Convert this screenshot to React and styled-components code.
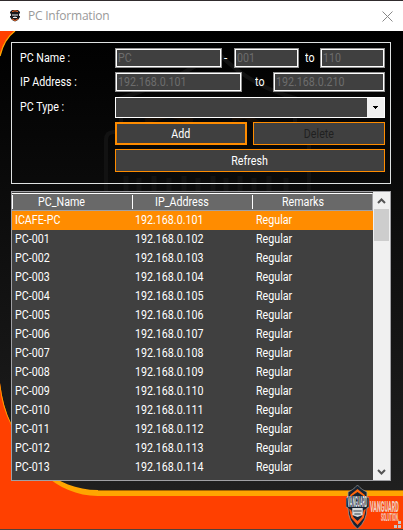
import React from "react";
import styled, { createGlobalStyle } from "styled-components";

const Global = createGlobalStyle`
  * { box-sizing: border-box; }
  body { margin: 0; background: #080808; overflow: hidden; }
`;
const Window = styled.main`
  position: relative;
  width: 403px;
  height: 530px;
  overflow: hidden;
  isolation: isolate;
  color: #fff;
  font: 12px/19px Roboto, sans-serif;
  white-space: nowrap;
`;
const Titlebar = styled.header`
  height: 31px;
  border-top: 1px solid #302b2d;
  display: flex;
  align-items: center;
  background: #fff;
  padding: 0 10px 0 9px;
`;
const Title = styled.h1`
  flex: 1;
  margin: 0 0 0 7px;
  color: #999;
  font: 400 12px/20px "Open Sans", sans-serif;
  letter-spacing: -0.22px;
`;
const Backdrop = styled.svg`
  position: absolute;
  z-index: -1;
  left: 0;
  top: 31px;
`;
const Form = styled.form`
  margin: 11px 13px 0 11px;
  width: 380px;
  height: 142px;
  border: 1px solid #dfe2e2;
  padding: 5px 5px 0 8px;
  display: grid;
  grid-template-rows: 20px 20px 22px 23px 23px;
  row-gap: 4px;
`;
const Line = styled.div`
  display: flex;
  align-items: center;
`;
const Text = styled.span`
  display: inline-block;
  transform: scaleX(0.89);
  transform-origin: ${(p) => (p.$center ? "center" : "left")};
`;
const Label = styled.label`
  width: 95px;
`;
const Field = styled.output`
  display: block;
  width: ${(p) => p.$width}px;
  height: 20px;
  padding: 0 2px;
  border: 1px solid #929292;
  outline: 1px solid #fff;
  outline-offset: -2px;
  background: #404040;
  color: #6d6d6d;
  line-height: 18px;
`;
const Joiner = styled.span`
  width: ${(p) => p.$width}px;
  padding-left: ${(p) => p.$pad}px;
`;
const Combo = styled.div`
  width: 270px;
  height: 21px;
  display: flex;
  justify-content: flex-end;
  border: 1px solid #fff;
  background: #404040;
`;
const Arrow = styled.span`
  width: 17px;
  background: #f0f0f0;
  display: grid;
  place-items: center;
`;
const Button = styled.button`
  width: ${(p) => p.$width}px;
  height: 23px;
  margin-left: ${(p) => p.$left || 0}px;
  padding: 0;
  border: ${(p) => (p.$primary ? 2 : 1)}px solid #ff8c00;
  background: #404040;
  color: ${(p) => (p.disabled ? "#202020" : "#fff")};
  font: 12px Roboto, sans-serif;
`;
const Grid = styled.section`
  width: 380px;
  height: 290px;
  margin: 7px 0 0 11px;
  border: 1px solid #a0a0a4;
  background: #404040;
  display: grid;
  grid-template-columns: 361px 17px;
`;
const Header = styled.div`
  height: 18px;
  display: grid;
  grid-template-columns: 120px 120px 120px;
  background: #696969;
  border-top: 1px solid #fff;
  border-bottom: 1px solid #a0a0a4;
  border-right: 1px solid #a0a0a4;
  margin-top: 1px;
  padding-top: 1px;
`;
const HeaderCell = styled.div`
  border-left: 1px solid #fff;
  height: 14px;
  padding-left: ${(p) => p.$pad}px;
  line-height: 15px;
`;
const Row = styled.div`
  height: 19px;
  display: grid;
  grid-template-columns: 120px 121px 117px;
  padding-left: 3px;
  line-height: 19px;
  background: ${(p) => (p.$selected ? "#ff8c00" : "#404040")};
`;
const Cell = styled.div`
  min-width: 0;
`;
const Scrollbar = styled.div`
  display: flex;
  flex-direction: column;
  align-items: center;
  background: #f0f0f0;
`;
const ScrollArrow = styled.span`
  height: 17px;
  display: grid;
  place-items: center;
`;
const Thumb = styled.div`
  width: 15px;
  height: 32px;
  margin-bottom: auto;
  background: #cdcdcd;
`;

const rows = Array.from({ length: 14 }, (_, i) => [
  i ? `PC-${String(i).padStart(3, "0")}` : "ICAFE-PC",
  `192.168.0.${101 + i}`,
]);

function Shield({ width, height }) {
  return (
    <svg width={width} height={height} viewBox="0 0 22 44" preserveAspectRatio="none">
      <path d="M11 0C8 4 4 6 2 7V12L0 13V22L2 23Q2 36 11 44Q20 36 20 23L22 22V13L20 12V7C18 6 14 4 11 0Z" fill="#172332" stroke="#a9aaaa" strokeWidth=".6" />
      <path d="M4 10L11 4L18 10V12L11 7L4 12Z" fill="#ff650c" />
      <path d="M3 24L5 33L11 40L17 33L19 24L17 25L15 32L11 36L7 32L5 25Z" fill="#ff5b16" />
      <path d="M6 23H16V30L11 32L6 30Z" fill="#d7dadb" />
      <path d="M7 26H15M8 29H14" stroke="#35404a" />
      <text transform="translate(1.5 21.5) scale(.25 1)" fill="#e5e8eb" fontFamily="Roboto" fontSize="14.3" fontWeight="700">VANGUARD</text>
    </svg>
  );
}

function Background() {
  return (
    <Backdrop width="403" height="499" viewBox="0 31 403 499">
      <defs><linearGradient id="night" x2="0" y2="1"><stop stopColor="#000" /><stop offset="1" stopColor="#222" /></linearGradient></defs>
      <path fill="url(#night)" d="M0 31H403V530H0Z" />
      <g fill="none" stroke="#121212" strokeWidth="4">
        <path d="M106 191V140Q106 132 114 132H121V98Q175 82 217 52Q250 86 295 98V132M309 141V191" />
        <path d="M126 176V191M139 178V191M154 176V191M169 178V191M184 176V191M198 178V191M213 176V191M226 178V191M240 176V191M254 178V191M269 176V191M286 178V191" strokeWidth="5" />
      </g>
      <path d="M145 121L170 115L193 121M232 119L245 116L260 124" stroke="#160d05" strokeWidth="5" fill="none" />
      <path d="M0 31H15Q4 39 0 56Z" fill="#ff4000" />
      <path d="M15 31Q4 39 0 56" fill="none" stroke="#ffa500" strokeWidth="1.3" />
      <path d="M0 383Q3 407 11 424C25 462 60 495 98 495H403V530H0Z" fill="#ff4000" />
      <path d="M0 383Q3 407 11 423C24 458 55 490 98 490H403V496H98C56 496 25 462 11 425Q2 407 0 388Z" fill="#ffa500" />
      <path d="M98 490.5H403" stroke="#a86600" />
      <path d="M0 529.5H403" stroke="#51413b" />
      <svg x="346" y="485" width="23" height="44"><Shield width="23" height="44" /></svg>
      <g fill="#f0c8ba" fontFamily="Roboto" fontWeight="900">
        <text transform="translate(370 511.5) scale(.36 1)" fontSize="15">VANGUARD</text>
        <text transform="translate(381 521) scale(.35 1)" fontSize="10">SOLUTION.</text>
      </g>
      <path d="M398 521h3v3h-3zM394 525h3v3h-3zM398 525h3v3h-3z" fill="#c5c5c5" />
    </Backdrop>
  );
}

export default function App() {
  return (
    <>
      <Global />
      <Window>
        <Background />
        <Titlebar>
          <svg width="12" height="12" viewBox="0 0 12 12"><path d="M3 0H9L11 2V7L9 10L6 11.5L3 10L1 7V2Z" fill="#17191c" /><path d="M3 1.5L6 .8L9 1.5M3 9L6 10.5L9 9" stroke="#fb6b24" fill="none" /><path d="M1.5 3.5V6M4 4V6M6 4V6.5M8 4V6M10.5 3.5V6M4 7.5H8" stroke="#eee" fill="none" /></svg>
          <Title>PC Information</Title>
          <svg width="11" height="11" viewBox="0 0 11 11"><path d="M.5 .5L10.5 10.5M10.5 .5L.5 10.5" stroke="#888" /></svg>
        </Titlebar>
        <Form>
          <Line>
            <Label><Text>PC Name :</Text></Label>
            <Field $width={107}><Text>PC</Text></Field>
            <Joiner $width={12} $pad={2}>-</Joiner>
            <Field $width={65}><Text>001</Text></Field>
            <Joiner $width={21} $pad={6}><Text>to</Text></Joiner>
            <Field $width={65}><Text>110</Text></Field>
          </Line>
          <Line>
            <Label><Text>IP Address :</Text></Label>
            <Field $width={127}><Text>192.168.0.101</Text></Field>
            <Joiner $width={31} $pad={13}><Text>to</Text></Joiner>
            <Field $width={112}><Text>192.168.0.210</Text></Field>
          </Line>
          <Line>
            <Label><Text>PC Type :</Text></Label>
            <Combo><Arrow><svg width="5" height="3"><path d="M0 0H5V1H4V2H3V3H2V2H1V1H0Z" /></svg></Arrow></Combo>
          </Line>
          <Line>
            <Button type="button" $width={132} $left={95} $primary><Text $center>Add</Text></Button>
            <Button type="button" $width={132} $left={6} disabled><Text $center>Delete</Text></Button>
          </Line>
          <Line><Button type="button" $width={270} $left={95}><Text $center>Refresh</Text></Button></Line>
        </Form>
        <Grid>
          <div>
            <Header>
              <HeaderCell $pad={25}><Text>PC_Name</Text></HeaderCell>
              <HeaderCell $pad={22}><Text>IP_Address</Text></HeaderCell>
              <HeaderCell $pad={29}><Text>Remarks</Text></HeaderCell>
            </Header>
            {rows.map(([name, ip], i) => (
              <Row key={name} $selected={i === 0}>
                <Cell><Text>{name}</Text></Cell>
                <Cell><Text>{ip}</Text></Cell>
                <Cell><Text>Regular</Text></Cell>
              </Row>
            ))}
          </div>
          <Scrollbar>
            <ScrollArrow><svg width="9" height="6"><path d="M1 5L4.5 1.5L8 5" fill="none" stroke="#555" strokeWidth="2" /></svg></ScrollArrow>
            <Thumb />
            <ScrollArrow><svg width="9" height="6"><path d="M1 1L4.5 4.5L8 1" fill="none" stroke="#555" strokeWidth="2" /></svg></ScrollArrow>
          </Scrollbar>
        </Grid>
      </Window>
    </>
  );
}
